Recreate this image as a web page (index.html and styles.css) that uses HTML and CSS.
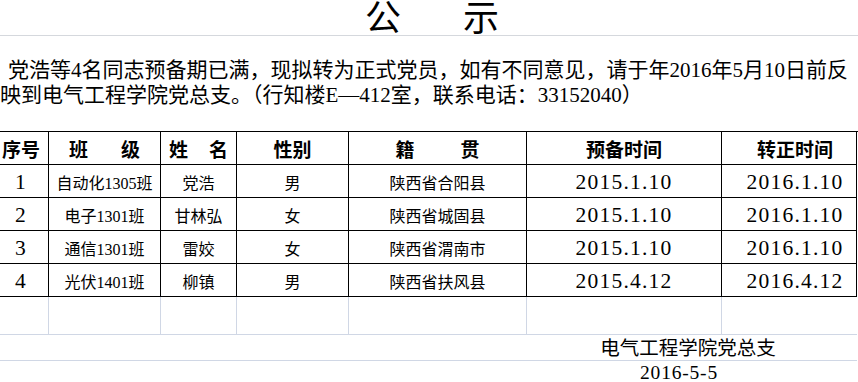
FILE: index.html
```html
<!DOCTYPE html>
<html lang="zh-CN">
<head>
<meta charset="utf-8">
<title>公示</title>
<link rel="stylesheet" href="styles.css">
</head>
<body>
<div class="sheet">
  <header class="title"><span>公</span><span>示</span></header>
  <p class="notice">党浩等4名同志预备期已满，现拟转为正式党员，如有不同意见，请于年2016年5月10日前反<br>映到电气工程学院党总支。（行知楼E—412室，联系电话：33152040）</p>
  <div class="grid">
    <div class="c h">序号</div>
    <div class="c h"><span class="sp-class">班</span>级</div>
    <div class="c h"><span class="sp-name">姓</span>名</div>
    <div class="c h">性别</div>
    <div class="c h"><span class="sp-origin">籍</span>贯</div>
    <div class="c h">预备时间</div>
    <div class="c h last">转正时间</div>

    <div class="c num">1</div>
    <div class="c t">自动化1305班</div>
    <div class="c t">党浩</div>
    <div class="c t">男</div>
    <div class="c t">陕西省合阳县</div>
    <div class="c num">2015.1.10</div>
    <div class="c num last">2016.1.10</div>

    <div class="c num">2</div>
    <div class="c t">电子1301班</div>
    <div class="c t">甘林弘</div>
    <div class="c t">女</div>
    <div class="c t">陕西省城固县</div>
    <div class="c num">2015.1.10</div>
    <div class="c num last">2016.1.10</div>

    <div class="c num">3</div>
    <div class="c t">通信1301班</div>
    <div class="c t">雷姣</div>
    <div class="c t">女</div>
    <div class="c t">陕西省渭南市</div>
    <div class="c num">2015.1.10</div>
    <div class="c num last">2016.1.10</div>

    <div class="c num">4</div>
    <div class="c t">光伏1401班</div>
    <div class="c t">柳镇</div>
    <div class="c t">男</div>
    <div class="c t">陕西省扶风县</div>
    <div class="c num">2015.4.12</div>
    <div class="c num last">2016.4.12</div>

    <div class="e"></div>
    <div class="e"></div>
    <div class="e"></div>
    <div class="e"></div>
    <div class="e"></div>
    <div class="e"></div>
    <div class="e end"></div>

    <div class="blank-left"></div>
    <div class="sign">电气工程学院党总支</div>

    <div class="date-left"></div>
    <div class="date">2016-5-5</div>
  </div>
</div>
</body>
</html>
```
FILE: styles.css
```css
html, body {
  margin: 0;
  padding: 0;
  background: #ffffff;
}

body {
  width: 858px;
  height: 382px;
  overflow: hidden;
  color: #000000;
  font-family: "Liberation Serif", "Noto Sans CJK SC", serif;
}

.sheet {
  width: 858px;
}

.title {
  height: 35px;
  box-sizing: content-box;
  border-bottom: 1px solid #d5d8dd;
  display: flex;
  justify-content: center;
  align-items: flex-end;
  gap: 62px;
  padding-left: 6px;
  font-family: "Noto Sans CJK SC", serif;
  font-size: 36px;
  line-height: 36px;
  overflow: hidden;
}

.title span {
  position: relative;
  top: -2px;
}

.notice {
  margin: 0;
  padding: 22px 0 23px 0;
  font-size: 21px;
  line-height: 25px;
  white-space: nowrap;
  text-indent: 8px;
}

.grid {
  display: grid;
  grid-template-columns: 55px 112px 76px 112px 178px 195px 135px;
  margin-left: -6px;
  border-top: 1px solid #000000;
}

.c {
  box-sizing: border-box;
  height: 33px;
  border-right: 1px solid #000000;
  border-bottom: 1px solid #000000;
  display: flex;
  align-items: center;
  justify-content: center;
  white-space: nowrap;
}

.c.last {
  padding-left: 12px;
}

.h {
  font-family: "Noto Sans CJK SC", sans-serif;
  font-weight: 700;
  font-size: 19px;
  padding-top: 1px;
}

.sp-class { letter-spacing: 33px; }
.sp-name { letter-spacing: 21px; }
.sp-origin { letter-spacing: 46px; }

.t {
  font-family: "Liberation Serif", "Noto Sans CJK SC", serif;
  font-size: 16px;
  padding-top: 2px;
}

.num {
  font-family: "Liberation Serif", serif;
  font-size: 21.5px;
  letter-spacing: 1.2px;
  padding-top: 2px;
}

.e {
  box-sizing: border-box;
  height: 38px;
  border-right: 1px solid #d0d7e5;
  border-bottom: 1px solid #d0d7e5;
}

.e.end {
  border-right: 0;
}

.blank-left {
  grid-column: 1 / 6;
  height: 26px;
  box-sizing: border-box;
  border-bottom: 1px solid #d0d7e5;
}

.sign {
  grid-column: 6 / 8;
  height: 26px;
  box-sizing: border-box;
  border-bottom: 1px solid #d0d7e5;
  font-family: "Noto Sans CJK SC", sans-serif;
  font-size: 19.5px;
  line-height: 24px;
  text-align: center;
  padding-right: 8px;
}

.date-left {
  grid-column: 1 / 6;
  height: 24px;
}

.date {
  grid-column: 6 / 8;
  height: 24px;
  font-family: "Liberation Serif", serif;
  font-size: 19.5px;
  line-height: 24px;
  letter-spacing: 0.8px;
  text-align: center;
  padding-right: 26px;
}
```
